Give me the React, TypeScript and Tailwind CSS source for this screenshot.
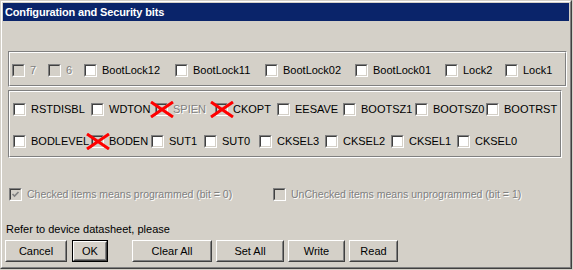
import React from 'react';

type Bit = {
  label: string;
  w: string;
  disabled?: boolean;
  dimLabel?: boolean;
  crossed?: boolean;
};

const row1: Bit[] = [
  { label: '7', w: 'w-[36px]', disabled: true, dimLabel: true },
  { label: '6', w: 'w-[36px]', disabled: true, dimLabel: true },
  { label: 'BootLock12', w: 'w-[91px]' },
  { label: 'BootLock11', w: 'w-[90px]' },
  { label: 'BootLock02', w: 'w-[90px]' },
  { label: 'BootLock01', w: 'w-[90px]' },
  { label: 'Lock2', w: 'w-[60px]' },
  { label: 'Lock1', w: 'w-[50px]' },
];

const row2: Bit[] = [
  { label: 'RSTDISBL', w: 'w-[78px]' },
  { label: 'WDTON', w: 'w-[64px]' },
  { label: 'SPIEN', w: 'w-[60px]', disabled: true, dimLabel: true, crossed: true },
  { label: 'CKOPT', w: 'w-[62px]', disabled: true, crossed: true },
  { label: 'EESAVE', w: 'w-[66px]' },
  { label: 'BOOTSZ1', w: 'w-[72px]' },
  { label: 'BOOTSZ0', w: 'w-[71px]' },
  { label: 'BOOTRST', w: 'w-[70px]' },
];

const row3: Bit[] = [
  { label: 'BODLEVEL', w: 'w-[78px]' },
  { label: 'BODEN', w: 'w-[60px]', disabled: true, crossed: true },
  { label: 'SUT1', w: 'w-[53px]' },
  { label: 'SUT0', w: 'w-[55px]' },
  { label: 'CKSEL3', w: 'w-[66px]' },
  { label: 'CKSEL2', w: 'w-[66px]' },
  { label: 'CKSEL1', w: 'w-[66px]' },
  { label: 'CKSEL0', w: 'w-[60px]' },
];

const dimText = 'text-[#808080] [text-shadow:1px_1px_0_#ffffff]';

// sunken 13px check box, classic windows look
const Box: React.FC<{ disabled?: boolean; checked?: boolean; crossed?: boolean }> = ({
  disabled,
  checked,
  crossed,
}) => (
  <div className="relative w-[13px] h-[13px] shrink-0 border border-t-[#808080] border-l-[#808080] border-r-white border-b-white">
    <div
      className={`w-full h-full border border-t-[#404040] border-l-[#404040] border-r-[#d4d0c8] border-b-[#d4d0c8] ${
        disabled ? 'bg-[#d4d0c8]' : 'bg-white'
      }`}
    >
      {checked && (
        <svg width="9" height="9" viewBox="0 0 9 9" className="block">
          <path d="M1.5 4 L3.5 6 L7.5 2" fill="none" stroke="#808080" strokeWidth="1.6" />
        </svg>
      )}
    </div>
    {/* red cross over bits that must not be touched */}
    {crossed && (
      <svg
        width="24"
        height="17"
        viewBox="0 0 24 17"
        className="absolute left-[-6px] top-[-3px] pointer-events-none"
      >
        <path d="M1 1 L23 16 M23 1 L1 16" stroke="#ff0000" strokeWidth="3" fill="none" />
      </svg>
    )}
  </div>
);

const BitRow: React.FC<{ bits: Bit[] }> = ({ bits }) => (
  <div className="flex items-center h-[13px]">
    {bits.map((b) => (
      <div key={b.label} className={`flex items-center shrink-0 ${b.w}`}>
        <Box disabled={b.disabled} crossed={b.crossed} />
        <span className={`ml-[5px] leading-[13px] whitespace-nowrap ${b.dimLabel ? dimText : 'text-black'}`}>
          {b.label}
        </span>
      </div>
    ))}
  </div>
);

// etched frame like a TBevel / group box without caption
const Etched: React.FC<{ className: string; children: React.ReactNode }> = ({ className, children }) => (
  <div className={`border border-t-[#808080] border-l-[#808080] border-r-white border-b-white ${className}`}>
    <div className="w-full h-full border border-t-white border-l-white border-r-[#808080] border-b-[#808080]">
      {children}
    </div>
  </div>
);

const Btn: React.FC<{ w: string; isDefault?: boolean; children: React.ReactNode }> = ({ w, isDefault, children }) => (
  <div className={`${w} h-[22px] ${isDefault ? 'border border-black' : ''}`}>
    <div className="w-full h-full border border-t-white border-l-white border-r-[#404040] border-b-[#404040]">
      <div className="w-full h-full flex items-center justify-center border border-t-[#d4d0c8] border-l-[#d4d0c8] border-r-[#808080] border-b-[#808080] text-black">
        {children}
      </div>
    </div>
  </div>
);

export default function App() {
  return (
    <div className="w-[573px] h-[270px] bg-[#d4d0c8] font-['Liberation_Sans',Arial,sans-serif] text-[11px]">
      <div className="w-[572px] h-[269px] border border-t-[#d4d0c8] border-l-[#d4d0c8] border-r-[#404040] border-b-[#404040]">
        <div className="w-full h-full p-px border border-t-white border-l-white border-r-[#808080] border-b-[#808080]">
          {/* title bar */}
          <div className="h-[18px] bg-[#0a246a] flex items-center pl-[2px] text-white font-bold text-[11px] tracking-[-0.15px]">
            Configuration and Security bits
          </div>

          <div className="pl-[5px] pt-[30px]">
            <Etched className="w-[559px] h-[36px]">
              <div className="pt-[11px] pl-[2px]">
                <BitRow bits={row1} />
              </div>
            </Etched>

            <Etched className="w-[554px] h-[68px] mt-[3px]">
              <div className="pt-[11px] pl-[3px] flex flex-col gap-[19px]">
                <BitRow bits={row2} />
                <BitRow bits={row3} />
              </div>
            </Etched>
          </div>

          {/* legend */}
          <div className="flex items-center h-[13px] mt-[30px] pl-[6px] text-[10.5px]">
            <div className="flex items-center w-[264px] shrink-0">
              <Box disabled checked />
              <span className={`ml-[5px] leading-[13px] whitespace-nowrap ${dimText}`}>
                Checked items means programmed (bit = 0)
              </span>
            </div>
            <div className="flex items-center">
              <Box disabled />
              <span className={`ml-[5px] leading-[13px] whitespace-nowrap ${dimText}`}>
                UnChecked items means unprogrammed (bit = 1)
              </span>
            </div>
          </div>

          <div className="pl-[3px] mt-[22px] leading-[13px] text-black">Refer to device datasheet, please</div>

          <div className="flex items-center pl-[2px] mt-[4px]">
            <Btn w="w-[62px]">Cancel</Btn>
            <div className="ml-[5px]">
              <Btn w="w-[36px]" isDefault>
                OK
              </Btn>
            </div>
            <div className="ml-[24px] flex gap-[4px]">
              <Btn w="w-[80px]">Clear All</Btn>
              <Btn w="w-[68px]">Set All</Btn>
              <Btn w="w-[57px]">Write</Btn>
              <Btn w="w-[49px]">Read</Btn>
            </div>
          </div>
        </div>
      </div>
    </div>
  );
}
